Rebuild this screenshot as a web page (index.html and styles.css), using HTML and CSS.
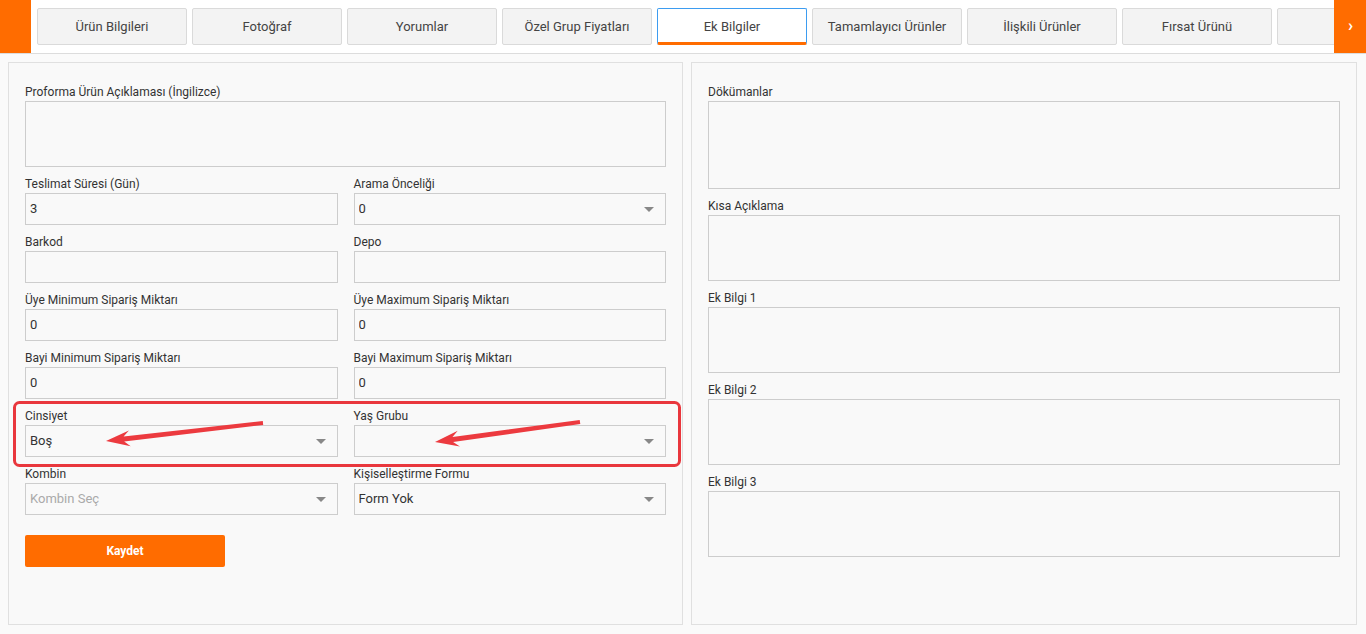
FILE: index.html
```html
<!DOCTYPE html>
<html lang="tr">
<head>
<meta charset="utf-8">
<title>Ek Bilgiler</title>
<link rel="stylesheet" href="styles.css">
</head>
<body>
<header class="topbar">
  <div class="edge edge-left"></div>
  <nav class="tabs">
    <a class="tab">Ürün Bilgileri</a>
    <a class="tab">Fotoğraf</a>
    <a class="tab">Yorumlar</a>
    <a class="tab">Özel Grup Fiyatları</a>
    <a class="tab active">Ek Bilgiler</a>
    <a class="tab">Tamamlayıcı Ürünler</a>
    <a class="tab">İlişkili Ürünler</a>
    <a class="tab">Fırsat Ürünü</a>
    <a class="tab"></a>
  </nav>
  <div class="edge edge-right"><span class="chev">›</span></div>
</header>

<main class="content">
  <section class="panel panel-left">
    <div class="form-grid">
      <div class="field span2">
        <label class="lbl">Proforma Ürün Açıklaması (İngilizce)</label>
        <textarea class="ta"></textarea>
      </div>
      <div class="field">
        <label class="lbl">Teslimat Süresi (Gün)</label>
        <input class="inp" type="text" value="3">
      </div>
      <div class="field">
        <label class="lbl">Arama Önceliği</label>
        <div class="sel"><select class="inp"><option>0</option></select></div>
      </div>
      <div class="field">
        <label class="lbl">Barkod</label>
        <input class="inp" type="text" value="">
      </div>
      <div class="field">
        <label class="lbl">Depo</label>
        <input class="inp" type="text" value="">
      </div>
      <div class="field">
        <label class="lbl">Üye Minimum Sipariş Miktarı</label>
        <input class="inp" type="text" value="0">
      </div>
      <div class="field">
        <label class="lbl">Üye Maximum Sipariş Miktarı</label>
        <input class="inp" type="text" value="0">
      </div>
      <div class="field">
        <label class="lbl">Bayi Minimum Sipariş Miktarı</label>
        <input class="inp" type="text" value="0">
      </div>
      <div class="field">
        <label class="lbl">Bayi Maximum Sipariş Miktarı</label>
        <input class="inp" type="text" value="0">
      </div>
      <div class="field">
        <label class="lbl">Cinsiyet</label>
        <div class="sel"><select class="inp"><option>Boş</option></select></div>
      </div>
      <div class="field">
        <label class="lbl">Yaş Grubu</label>
        <div class="sel"><select class="inp"><option></option></select></div>
      </div>
      <div class="field">
        <label class="lbl">Kombin</label>
        <div class="sel"><select class="inp placeholder"><option>Kombin Seç</option></select></div>
      </div>
      <div class="field">
        <label class="lbl">Kişiselleştirme Formu</label>
        <div class="sel"><select class="inp"><option>Form Yok</option></select></div>
      </div>
    </div>
    <button class="btn-save" type="button">Kaydet</button>
  </section>

  <section class="panel panel-right">
    <div class="field">
      <label class="lbl">Dökümanlar</label>
      <textarea class="ta ta-tall"></textarea>
    </div>
    <div class="field">
      <label class="lbl">Kısa Açıklama</label>
      <textarea class="ta"></textarea>
    </div>
    <div class="field">
      <label class="lbl">Ek Bilgi 1</label>
      <textarea class="ta"></textarea>
    </div>
    <div class="field">
      <label class="lbl">Ek Bilgi 2</label>
      <textarea class="ta"></textarea>
    </div>
    <div class="field">
      <label class="lbl">Ek Bilgi 3</label>
      <textarea class="ta"></textarea>
    </div>
  </section>
</main>

<svg class="annotation" width="1366" height="634" viewBox="0 0 1366 634" aria-hidden="true">
  <rect x="14.5" y="402.5" width="665" height="63" rx="5" ry="5" fill="none" stroke="#e9373d" stroke-width="3"/>
  <polygon fill="#ec3a3f" points="106,441 128.9,430.4 123.6,436.5 262.8,421 263.2,425 124.2,441.5 130.7,446.2"/>
  <polygon fill="#ec3a3f" points="435,442 457.7,430.8 452.5,437 579.7,420 580.3,424 453.1,442 459.9,446.6"/>
</svg>
</body>
</html>
```

FILE: styles.css
```css
* {
  box-sizing: border-box;
}

html, body {
  margin: 0;
  padding: 0;
}

body {
  font-family: Roboto, "Liberation Sans", Arial, sans-serif;
  color: #333;
  background: #fafafa;
  height: 634px;
  overflow: hidden;
  display: flex;
  flex-direction: column;
  position: relative;
}

/* ---------- top bar ---------- */
.topbar {
  display: flex;
  height: 54px;
  background: #fff;
  border-bottom: 1px solid #dcdcdc;
  flex: none;
}

.edge {
  width: 31px;
  flex: none;
  background: #ff6c00;
}

.edge-right {
  width: 32px;
  display: flex;
  align-items: center;
  justify-content: center;
  color: #fff;
}

.chev {
  font-size: 17px;
  font-weight: 700;
  line-height: 1;
  margin-top: -2px;
  margin-left: 1px;
}

.tabs {
  flex: 1;
  display: flex;
  gap: 5px;
  padding: 8px 0 0 6px;
  overflow: hidden;
  align-items: flex-start;
}

.tab {
  flex: none;
  width: 150px;
  height: 37px;
  display: flex;
  align-items: center;
  justify-content: center;
  background: #f3f3f3;
  border: 1px solid #dadada;
  border-radius: 2px;
  font-size: 13px;
  color: #444;
  white-space: nowrap;
}

.tab.active {
  background: #fff;
  border: 1px solid #3d9cf0;
  border-bottom: 3px solid #ff6c00;
  padding-top: 2px;
}

/* ---------- content ---------- */
.content {
  flex: 1;
  display: flex;
  gap: 8px;
  padding: 8px 9px 9px 8px;
  min-height: 0;
}

.panel {
  background: #f9f9f9;
  border: 1px solid #e0e0e0;
  padding: 20px 16px 16px 16px;
}

.panel-left {
  width: 675px;
  flex: none;
}

.panel-right {
  flex: 1;
  display: flex;
  flex-direction: column;
  gap: 8px;
}

.form-grid {
  display: grid;
  grid-template-columns: 1fr 1fr;
  column-gap: 16px;
  row-gap: 8px;
}

.span2 {
  grid-column: 1 / span 2;
}

.field {
  display: flex;
  flex-direction: column;
}

.lbl {
  font-size: 12px;
  line-height: 16px;
  padding-top: 1px;
  margin-bottom: 1px;
  color: #333;
}

.inp,
.ta {
  font-family: inherit;
  width: 100%;
  background: #f9f9f9;
  border: 1px solid #cdcdcd;
  border-radius: 0;
  color: #333;
  margin: 0;
  outline: none;
}

.inp {
  height: 32px;
  font-size: 13px;
  padding: 0 4px 2px 4px;
}

.ta {
  height: 66px;
  resize: none;
  display: block;
  padding: 4px;
  font-size: 13px;
}

.ta-tall {
  height: 88px;
}

.sel {
  position: relative;
}

.sel select {
  appearance: none;
  -webkit-appearance: none;
  padding: 0 24px 2px 4px;
}

.sel::after {
  content: "";
  position: absolute;
  right: 12px;
  top: 14px;
  width: 0;
  height: 0;
  border-left: 5px solid transparent;
  border-right: 5px solid transparent;
  border-top: 5px solid #888;
  pointer-events: none;
}

.placeholder {
  color: #aaa;
}

.btn-save {
  margin-top: 20px;
  width: 200px;
  height: 32px;
  background: #ff6c00;
  color: #fff;
  border: 0;
  border-radius: 2px;
  font-family: inherit;
  font-size: 12px;
  font-weight: 700;
}

/* ---------- annotation overlay ---------- */
.annotation {
  position: absolute;
  left: 0;
  top: 0;
  pointer-events: none;
}
```
